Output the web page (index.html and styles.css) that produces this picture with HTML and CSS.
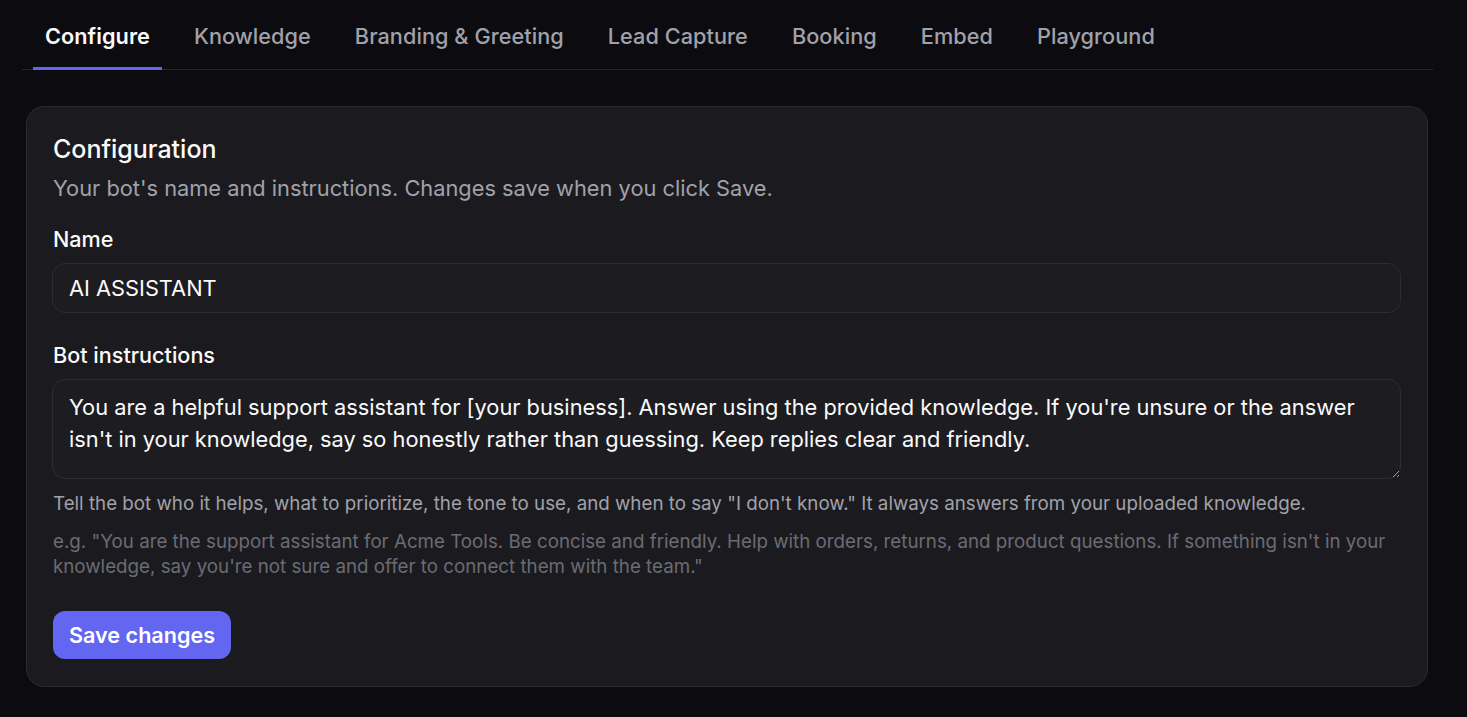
FILE: index.html
```html
<!DOCTYPE html>
<html lang="en">
<head>
  <meta charset="UTF-8">
  <meta name="viewport" content="width=device-width, initial-scale=1.0">
  <title>Bot Settings - Configure</title>
  <link rel="stylesheet" href="styles.css">
</head>
<body>
  <div class="page">
    <nav class="tabs">
      <button class="tab active">Configure</button>
      <button class="tab">Knowledge</button>
      <button class="tab">Branding &amp; Greeting</button>
      <button class="tab">Lead Capture</button>
      <button class="tab">Booking</button>
      <button class="tab">Embed</button>
      <button class="tab">Playground</button>
    </nav>

    <div class="card">
      <h2 class="card-title">Configuration</h2>
      <p class="card-sub">Your bot's name and instructions. Changes save when you click Save.</p>

      <label class="field-label" for="bot-name">Name</label>
      <input id="bot-name" class="field-input" type="text" value="AI ASSISTANT">

      <label class="field-label second" for="bot-instructions">Bot instructions</label>
      <textarea id="bot-instructions" class="field-area">You are a helpful support assistant for [your business]. Answer using the provided knowledge. If you're unsure or the answer isn't in your knowledge, say so honestly rather than guessing. Keep replies clear and friendly.</textarea>
      <p class="hint">Tell the bot who it helps, what to prioritize, the tone to use, and when to say "I don't know." It always answers from your uploaded knowledge.</p>
      <p class="example">e.g. "You are the support assistant for Acme Tools. Be concise and friendly. Help with orders, returns, and product questions. If something isn't in your knowledge, say you're not sure and offer to connect them with the team."</p>

      <button class="save-btn" type="button">Save changes</button>
    </div>
  </div>
</body>
</html>
```

FILE: styles.css
```css
* {
  margin: 0;
  padding: 0;
  box-sizing: border-box;
}

body {
  font-family: Inter, "Noto Sans", sans-serif;
  background-color: #0c0c10;
  color: #f4f4f5;
}

.page {
  padding: 0 34px 0 22px;
}

.tabs {
  display: flex;
  gap: 20px;
  padding-left: 11px;
  border-bottom: 1px solid #26262b;
}

.tab {
  border: none;
  background: none;
  font-family: inherit;
  font-size: 21.7px;
  font-weight: 500;
  letter-spacing: 0.05px;
  line-height: 26px;
  color: #a1a1aa;
  padding: 23px 12px 18px;
  border-bottom: 3px solid transparent;
  margin-bottom: -1px;
  cursor: pointer;
}

.tab.active {
  color: #fafafa;
  font-weight: 600;
  border-bottom-color: #6366f1;
}

.card {
  margin: 36px 5px 0 4px;
  background-color: #1b1b1f;
  border: 1px solid #2a2a2f;
  border-radius: 18px;
  padding: 27px 26px 27px 25px;
  display: flex;
  flex-direction: column;
  align-items: flex-start;
}

.card-title {
  font-size: 25px;
  font-weight: 500;
  line-height: 30px;
  color: #fafafa;
  margin-left: 1px;
}

.card-sub {
  margin: 12px 0 0 1px;
  font-size: 21.8px;
  line-height: 24px;
  color: #a1a1aa;
}

.field-label {
  margin: 27px 0 0 1px;
  font-size: 21.6px;
  font-weight: 500;
  line-height: 24px;
  color: #fafafa;
}

.field-label.second {
  margin-top: 30px;
}

.field-input,
.field-area {
  width: 100%;
  margin-top: 12px;
  background-color: #1c1c21;
  border: 1px solid #2c2c32;
  border-radius: 13px;
  color: #fafafa;
  font-family: inherit;
  font-size: 21.8px;
  padding: 12px 16px;
  outline: none;
}

.field-input {
  height: 50px;
}

.field-area {
  height: 100px;
  line-height: 32px;
  padding-top: 11px;
  resize: vertical;
}

.hint {
  margin: 13px 0 0 1px;
  font-size: 18.75px;
  line-height: 24px;
  color: #a1a1aa;
}

.example {
  margin: 13px 0 0 1px;
  font-size: 18.75px;
  line-height: 25px;
  color: #6b6b74;
}

.save-btn {
  margin: 32px 0 0 1px;
  height: 48px;
  padding: 0 16px;
  border: none;
  border-radius: 12px;
  background-color: #6366f1;
  color: #fff;
  font-family: inherit;
  font-size: 21.6px;
  font-weight: 600;
  cursor: pointer;
}

.save-btn:hover {
  background-color: #5457e0;
}
```
